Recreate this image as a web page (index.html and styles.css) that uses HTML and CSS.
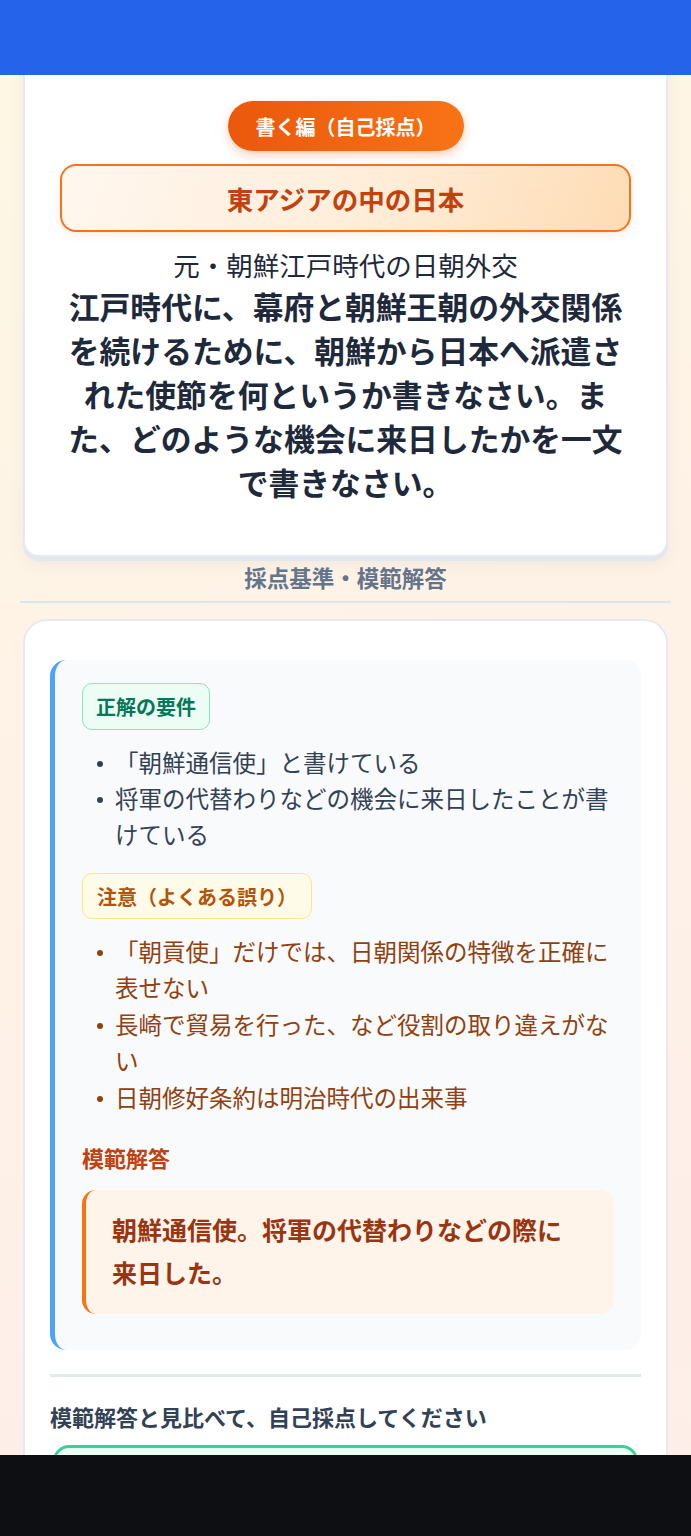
FILE: index.html
```html
<!DOCTYPE html>
<html lang="ja">
<head>
<meta charset="utf-8">
<title>書く編（自己採点）</title>
<link rel="stylesheet" href="styles.css">
</head>
<body>
<header class="topbar"></header>
<main class="page">
  <section class="card question-card">
    <div class="badge-row"><span class="badge">書く編（自己採点）</span></div>
    <div class="unit-title">東アジアの中の日本</div>
    <p class="topic">元・朝鮮江戸時代の日朝外交</p>
    <p class="question">江戸時代に、幕府と朝鮮王朝の外交関係を続けるために、朝鮮から日本へ派遣された使節を何というか書きなさい。また、どのような機会に来日したかを一文で書きなさい。</p>
  </section>
  <h2 class="section-label">採点基準・模範解答</h2>
  <hr class="section-rule">
  <section class="card answer-card">
    <div class="criteria">
      <span class="tag tag-ok">正解の要件</span>
      <ul class="list list-ok">
        <li>「朝鮮通信使」と書けている</li>
        <li>将軍の代替わりなどの機会に来日したことが書けている</li>
      </ul>
      <span class="tag tag-warn">注意（よくある誤り）</span>
      <ul class="list list-warn">
        <li>「朝貢使」だけでは、日朝関係の特徴を正確に表せない</li>
        <li>長崎で貿易を行った、など役割の取り違えがない</li>
        <li>日朝修好条約は明治時代の出来事</li>
      </ul>
      <h3 class="model-label">模範解答</h3>
      <div class="model-answer">朝鮮通信使。将軍の代替わりなどの際に来日した。</div>
    </div>
    <hr class="inner-rule">
    <p class="self-label">模範解答と見比べて、自己採点してください</p>
    <div class="choice choice-good"></div>
    <div class="choice choice-other"></div>
  </section>
</main>
<footer class="navbar"></footer>
</body>
</html>
```

FILE: styles.css
```css
* { box-sizing: border-box; }

html, body {
  margin: 0;
  padding: 0;
}

body {
  font-family: "Noto Sans CJK JP", "Noto Sans", sans-serif;
  background: linear-gradient(160deg, #fef8e4 0%, #fef2e6 45%, #fdeee9 100%);
  background-attachment: fixed;
  min-height: 1536px;
  color: #1e293b;
}

.topbar {
  position: fixed;
  top: 0;
  left: 0;
  right: 0;
  height: 75px;
  background: #2563eb;
  z-index: 10;
}

.navbar {
  position: fixed;
  left: 0;
  right: 0;
  bottom: 0;
  height: 81px;
  background: #0e0f13;
  z-index: 10;
}

.page {
  padding: 0 20px 200px;
}

.card {
  margin: 0 3px;
  background: #ffffff;
  border: 2px solid #e6eaf0;
}

.question-card {
  margin-top: 30px;
  border-radius: 16px;
  padding: 69px 35px 51px;
  box-shadow: 0 4px 0 #e1e7ef, 0 8px 16px rgba(100, 116, 139, 0.08);
  text-align: center;
}

.badge-row {
  display: flex;
  justify-content: center;
}

.badge {
  display: inline-flex;
  align-items: center;
  height: 50px;
  padding: 0 28px;
  border-radius: 25px;
  background: linear-gradient(90deg, #ea580c, #f97316);
  color: #ffffff;
  font-size: 20px;
  font-weight: 700;
  box-shadow: 0 4px 10px rgba(234, 88, 12, 0.3);
}

.unit-title {
  margin: 13px 0 0;
  height: 68px;
  display: flex;
  align-items: center;
  justify-content: center;
  border: 2.5px solid #f97316;
  border-radius: 16px;
  background: linear-gradient(110deg, #fff7ef 0%, #ffedd9 55%, #fedcb4 100%);
  color: #c2410c;
  font-size: 26.5px;
  font-weight: 700;
  box-shadow: 0 3px 8px rgba(249, 115, 22, 0.12);
}

.topic {
  margin: 14px 0 0;
  font-size: 26.5px;
  line-height: 38px;
  font-weight: 400;
  color: #1e293b;
}

.question {
  margin: 0;
  font-size: 30.8px;
  line-height: 44px;
  font-weight: 700;
  color: #1e293b;
}

.section-label {
  margin: 5px 0 0;
  text-align: center;
  font-size: 22.5px;
  line-height: 30px;
  font-weight: 700;
  color: #64748b;
}

.section-rule {
  margin: 9px 0 0;
  border: 0;
  height: 2px;
  background: #d9e4ef;
}

.answer-card {
  margin-top: 16px;
  border-radius: 24px;
  padding: 39px 25px 30px;
}

.criteria {
  background: #f8fafc;
  border-left: 5px solid #4ea2f8;
  border-radius: 16px;
  padding: 23px 27px 36px;
}

.tag {
  display: inline-flex;
  align-items: center;
  height: 47px;
  padding: 0 13px;
  border-radius: 10px;
  font-size: 20px;
  font-weight: 700;
}

.tag-ok {
  background: #ecfdf5;
  border: 1.5px solid #8fe4bd;
  color: #047857;
}

.tag-warn {
  height: 46px;
  padding: 0 14px;
  background: #fefce8;
  border: 1.5px solid #fde68a;
  color: #b45309;
}

.list {
  margin: 14px 0 0;
  padding: 0;
  list-style: none;
  font-size: 23.5px;
  line-height: 36px;
}

.list li {
  display: grid;
  grid-template-columns: 33px 1fr;
}

.list li::before {
  content: "";
  width: 6px;
  height: 6px;
  margin: 17px 0 0 15px;
  border-radius: 50%;
  background: currentColor;
}

.list-ok {
  color: #334155;
  margin-bottom: 21px;
}

.list-warn {
  color: #92400e;
}

.list-warn li + li {
  margin-top: 1px;
}

.model-label {
  margin: 27px 0 0;
  font-size: 22px;
  line-height: 30px;
  font-weight: 700;
  color: #c2410c;
}

.model-answer {
  margin-top: 18px;
  background: #fff4e9;
  border-left: 4px solid #f97316;
  border-radius: 14px;
  padding: 18px 32px 20px 26px;
  font-size: 25px;
  line-height: 43px;
  font-weight: 700;
  color: #9a3412;
}

.inner-rule {
  margin: 24px 0 0;
  border: 0;
  height: 3px;
  background: #e2e8f0;
}

.self-label {
  margin: 24px 0 0;
  font-size: 22px;
  line-height: 30px;
  font-weight: 700;
  color: #334155;
}

.choice {
  margin: 14px 3px 0;
  height: 72px;
  border-radius: 16px;
}

.choice-good {
  background: #ecfdf5;
  border: 3px solid #34d399;
}

.choice-other {
  background: #fff7ed;
  border: 3px solid #fdba74;
}
```
